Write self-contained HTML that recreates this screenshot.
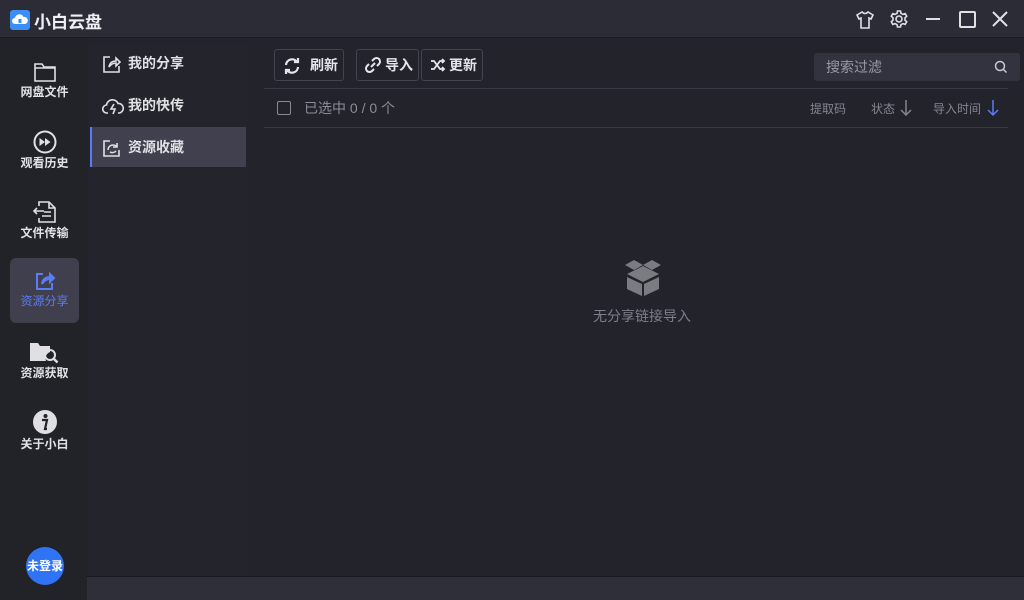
<!DOCTYPE html>
<html><head><meta charset="utf-8"><style>
*{margin:0;padding:0;box-sizing:border-box}
body{width:1024px;height:600px;overflow:hidden;background:#23232c;font-family:"Liberation Sans","Noto Sans CJK SC",sans-serif;color:#d8d8de;position:relative}
.abs{position:absolute}
#title{left:0;top:0;width:1024px;height:38px;background:#2c2c37;border-bottom:1px solid #1a1a20}
#side{left:0;top:38px;width:87px;height:562px;background:#222229}
#sub{left:88px;top:43px;width:159px;height:533px;background:#24242c}
#main{left:250px;top:38px;width:774px;height:538px;background:#23232c}
#foot{left:87px;top:576px;width:937px;height:24px;background:#2f2f3a;border-top:1px solid #18181e}
.nav{position:absolute;left:10px;width:69px;height:65px;text-align:center;font-size:12px;color:#e2e2e6;font-weight:bold}
.nav svg{display:block;margin:5px auto 0}
.sitem{position:absolute;left:90px;width:156px;height:40px;font-size:14px;color:#e0e0e4;line-height:40px;padding-left:38px;font-weight:bold}
.sitem svg{position:absolute;left:12px;top:11px}
.btn{position:absolute;top:49px;height:32px;border:1px solid #43434f;border-radius:3px;font-size:14px;color:#e6e6ea;line-height:30px;font-weight:bold}
.btn svg{position:absolute;top:7px}
</style></head><body>
<div id="title" class="abs">
 <div class="abs" style="left:10px;top:10px;width:20px;height:20px;background:#3a8ef6;border-radius:3px">
  <svg width="20" height="20" viewBox="0 0 20 20"><path d="M5 14a3 3 0 0 1 0-6a4.5 4.5 0 0 1 8.5-1a3.5 3.5 0 0 1 1.5 7z" fill="#fff"/><rect x="8.5" y="9" width="3" height="4" fill="#3a8ef6"/></svg>
 </div>
 <div class="abs" style="left:34px;top:8px;font-size:17px;font-weight:bold;color:#f0f0f4">小白云盘</div>
 <svg class="abs" style="left:855px;top:10px" width="20" height="20" viewBox="0 0 20 20" fill="none" stroke="#e0e0e4" stroke-width="1.6"><path d="M7 2L2 5l2 4 2-1v10h8V8l2 1 2-4-5-3q-3 3-6 0z"/></svg>
 <svg class="abs" style="left:889px;top:9px" width="20" height="20" viewBox="0 0 20 20" fill="none" stroke="#e0e0e4" stroke-width="1.6"><circle cx="10" cy="10" r="3"/><path d="M8.5 2h3l.5 2.3 2 1.1 2.2-.8 1.5 2.6-1.7 1.6v2.4l1.7 1.6-1.5 2.6-2.2-.8-2 1.1-.5 2.3h-3l-.5-2.3-2-1.1-2.2.8-1.5-2.6 1.7-1.6V8.8L2.3 7.2l1.5-2.6 2.2.8 2-1.1z"/></svg>
 <div class="abs" style="left:926px;top:18px;width:14px;height:2px;background:#e0e0e4"></div>
 <div class="abs" style="left:959px;top:11px;width:17px;height:17px;border:2px solid #e0e0e4;border-radius:2px"></div>
 <svg class="abs" style="left:992px;top:11px" width="16" height="16" viewBox="0 0 16 16" stroke="#e0e0e4" stroke-width="2"><path d="M1 1L15 15M15 1L1 15"/></svg>
</div>
<div id="side" class="abs"></div>
<div id="sub" class="abs"></div>
<div id="main" class="abs"></div>
<div id="foot" class="abs"></div>

<div class="nav" style="top:56px"><svg width="24" height="22" viewBox="0 0 24 22" fill="none" stroke="#e0e0e4" stroke-width="1.6"><path d="M2 3h7l2 3h11v14H2z"/><path d="M2 7h20"/></svg>网盘文件</div>
<div class="nav" style="top:125px"><svg width="24" height="24" viewBox="0 0 24 24"><circle cx="12" cy="12" r="10.5" fill="none" stroke="#e0e0e4" stroke-width="2"/><path d="M6.5 8v8l5.5-4zM12 8v8l5.5-4z" fill="#e0e0e4"/></svg>观看历史</div>
<div class="nav" style="top:195px"><svg width="26" height="24" viewBox="0 0 26 24" fill="none" stroke="#e0e0e4" stroke-width="1.6"><path d="M7 6V2h10l6 6v14H7v-4"/><path d="M17 2v6h6"/><path d="M2 11h10M5 8l-3 3 3 3M10 16h9M12 12h7"/></svg>文件传输</div>
<div class="abs" style="left:10px;top:258px;width:69px;height:65px;background:#3f3f4d;border-radius:6px"></div>
<div class="nav" style="top:265px;color:#5b7cf4;font-weight:normal"><svg width="22" height="22" viewBox="0 0 22 22" fill="none" stroke="#5b7cf4" stroke-width="2"><path d="M9 4H3v15h15v-6"/><path d="M8 14q1-7 8-7V4l4 4-4 4V9q-5 0-8 5z" fill="#5b7cf4"/></svg>资源分享</div>
<div class="nav" style="top:335px"><svg width="34" height="24" viewBox="0 0 34 24"><path d="M2 3h8l2 3h10v6a7 7 0 0 0-4 9H2z" fill="#e0e0e4"/><circle cx="22" cy="15" r="5" fill="none" stroke="#e0e0e4" stroke-width="2"/><path d="M25.5 18.5l4 4" stroke="#e0e0e4" stroke-width="2.4"/></svg>资源获取</div>
<div class="nav" style="top:404px"><svg width="26" height="26" viewBox="0 0 26 26"><circle cx="13" cy="13" r="12" fill="#e0e0e4"/><circle cx="13.5" cy="7" r="2" fill="#222229"/><path d="M10 11h5l-2 9h2" stroke="#222229" stroke-width="2.2" fill="none"/></svg>关于小白</div>
<div class="abs" style="left:26px;top:547px;width:38px;height:38px;border-radius:50%;background:#2f74f5;color:#fff;font-size:12px;font-weight:bold;text-align:center;line-height:38px">未登录</div>

<div class="sitem" style="top:43px"><svg width="20" height="20" viewBox="0 0 20 20" fill="none" stroke="#e0e0e4" stroke-width="1.6"><path d="M8 3H2v15h15v-6"/><path d="M7 13q1-6 7-6V4l4 4-4 4V9q-4 0-7 4z"/></svg>我的分享</div>
<div class="sitem" style="top:85px"><svg width="22" height="20" viewBox="0 0 22 20" fill="none" stroke="#e0e0e4" stroke-width="1.6"><path d="M6 17H5a4 4 0 0 1-.5-8A6 6 0 0 1 16 7.5a4.5 4.5 0 0 1 1 9.5h-1"/><path d="M12 8l-3 5h4l-2 5" /></svg>我的快传</div>
<div class="abs" style="left:90px;top:127px;width:156px;height:40px;background:#40404e;border-left:2px solid #5b7cf4"></div>
<div class="sitem" style="top:127px"><svg width="20" height="20" viewBox="0 0 20 20" fill="none" stroke="#e0e0e4" stroke-width="1.6"><path d="M8 3H2v15h15v-6"/><path d="M6 12a5 5 0 0 1 9-3M15 5v4h-4M14 13a5 5 0 0 1-6 1"/></svg>资源收藏</div>

<div class="btn" style="left:274px;width:70px"><svg style="left:8px" width="18" height="18" viewBox="0 0 18 18" fill="none" stroke="#e6e6ea" stroke-width="2.2"><path d="M3 8a6 6 0 0 1 11-3M15 1v4h-4M15 10a6 6 0 0 1-11 3M3 17v-4h4"/></svg><span style="position:absolute;left:35px">刷新</span></div>
<div class="btn" style="left:356px;width:63px"><svg style="left:6px;top:5px" width="20" height="20" viewBox="0 0 20 20" fill="none" stroke="#e6e6ea" stroke-width="2"><path d="M8 12l4-4M9 6l2-2a3.5 3.5 0 0 1 5 5l-2 2M11 14l-2 2a3.5 3.5 0 0 1-5-5l2-2"/></svg><span style="position:absolute;left:28px">导入</span></div>
<div class="btn" style="left:421px;width:62px"><svg style="left:8px;top:8px" width="16" height="14" viewBox="0 0 16 14" fill="none" stroke="#e6e6ea" stroke-width="1.8"><path d="M1 3h3l6 8h4M1 11h3l6-8h4M12 1l2 2-2 2M12 9l2 2-2 2"/></svg><span style="position:absolute;left:27px">更新</span></div>

<div class="abs" style="left:814px;top:53px;width:206px;height:28px;background:#33333f;border-radius:3px;font-size:14px;color:#9a9aa4;line-height:28px;padding-left:12px">搜索过滤</div>
<svg class="abs" style="left:994px;top:60px" width="14" height="14" viewBox="0 0 14 14" fill="none" stroke="#c8c8d0" stroke-width="1.5"><circle cx="6" cy="6" r="4.5"/><path d="M9.5 9.5l3 3"/></svg>

<div class="abs" style="left:264px;top:88px;width:744px;height:1px;background:#3a3a45"></div>
<div class="abs" style="left:264px;top:127px;width:744px;height:1px;background:#3a3a45"></div>
<div class="abs" style="left:277px;top:101px;width:14px;height:14px;border:1.5px solid #8a8a94;border-radius:2px"></div>
<div class="abs" style="left:304px;top:98px;font-size:14px;color:#8c8c96">已选中 0 / 0 个</div>
<div class="abs" style="left:810px;top:100px;font-size:12px;color:#85858f">提取码</div>
<div class="abs" style="left:871px;top:100px;font-size:12px;color:#85858f">状态</div>
<svg class="abs" style="left:899px;top:99px" width="14" height="18" viewBox="0 0 14 18" fill="none" stroke="#85858f" stroke-width="1.5"><path d="M7 1v15M2 11l5 5 5-5"/></svg>
<div class="abs" style="left:933px;top:100px;font-size:12px;color:#85858f">导入时间</div>
<svg class="abs" style="left:986px;top:99px" width="14" height="18" viewBox="0 0 14 18" fill="none" stroke="#5b7cf4" stroke-width="1.5"><path d="M7 1v15M2 11l5 5 5-5"/></svg>

<svg class="abs" style="left:623px;top:259px" width="40" height="38" viewBox="0 0 40 38" fill="#7b7b82"><path d="M2 6l9-5 9 5-9 5zM20 6l9-5 9 5-9 5z"/><path d="M4 15l16-8 16 8-16 8z"/><path d="M4 18l15 7v12L4 30zM36 18l-15 7v12l15-7z"/></svg>
<div class="abs" style="left:593px;top:306px;font-size:14px;color:#7e7e88">无分享链接导入</div>
</body></html>
